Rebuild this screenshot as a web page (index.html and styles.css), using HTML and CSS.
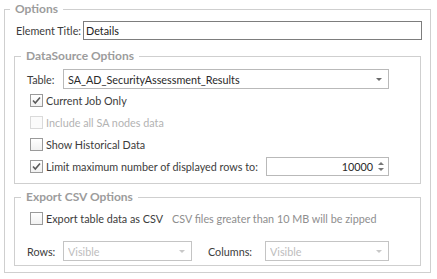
FILE: index.html
```html
<!DOCTYPE html>
<html>
<head>
<meta charset="utf-8">
<link rel="stylesheet" href="styles.css">
</head>
<body>
<fieldset class="group outer">
  <legend class="legend">Options</legend>
  <div class="title-row">
    <span class="label">Element Title:</span>
    <div class="textbox">Details</div>
  </div>

  <fieldset class="group inner ds">
    <legend class="legend">DataSource Options</legend>
    <div class="table-row">
      <span class="label field-label">Table:</span>
      <div class="combo">
        <span class="combo-text">SA_AD_SecurityAssessment_Results</span>
        <span class="arrow"></span>
      </div>
    </div>
    <div class="check-row">
      <span class="cb checked"><svg viewBox="0 0 13 13" width="13" height="13"><path d="M3 6.5 L5.3 9 L10 3.5" fill="none" stroke="#5a5a5a" stroke-width="1.6"/></svg></span>
      <span class="label">Current Job Only</span>
    </div>
    <div class="check-row disabled">
      <span class="cb"></span>
      <span class="label">Include all SA nodes data</span>
    </div>
    <div class="check-row">
      <span class="cb"></span>
      <span class="label">Show Historical Data</span>
    </div>
    <div class="check-row limit-row">
      <span class="cb checked"><svg viewBox="0 0 13 13" width="13" height="13"><path d="M3 6.5 L5.3 9 L10 3.5" fill="none" stroke="#5a5a5a" stroke-width="1.6"/></svg></span>
      <span class="label">Limit maximum number of displayed rows to:</span>
      <div class="spin">
        <span class="spin-value">10000</span>
        <span class="spin-btns"><span class="up"></span><span class="down"></span></span>
      </div>
    </div>
  </fieldset>

  <fieldset class="group inner csv">
    <legend class="legend">Export CSV Options</legend>
    <div class="check-row">
      <span class="cb"></span>
      <span class="label">Export table data as CSV</span>
      <span class="note">CSV files greater than 10 MB will be zipped</span>
    </div>
    <div class="rc-row">
      <span class="label field-label">Rows:</span>
      <div class="combo disabled-combo rows-combo">
        <span class="combo-text">Visible</span>
        <span class="arrow"></span>
      </div>
      <span class="label cols-label">Columns:</span>
      <div class="combo disabled-combo cols-combo">
        <span class="combo-text">Visible</span>
        <span class="arrow"></span>
      </div>
    </div>
  </fieldset>
</fieldset>
</body>
</html>
```

FILE: styles.css
```css
html, body {
  margin: 0;
  padding: 0;
  background: #ffffff;
}
body {
  font-family: Lato, "Open Sans", sans-serif;
  font-size: 10.8px;
  color: #3c3c3c;
  width: 437px;
  height: 279px;
  overflow: hidden;
}
.group {
  border: 1px solid #cfcfcf;
  margin: 0;
  min-width: 0;
}
.legend {
  font-weight: bold;
  font-size: 12px;
  line-height: 16px;
  color: #9c9c9c;
  padding: 0 5px;
}
.outer {
  margin: 1px 6px 0 4px;
  padding: 0 8px 6px 9px;
}
.outer > .legend {
  margin-left: -4px;
}
.title-row {
  display: flex;
  align-items: center;
  height: 19px;
  margin: 4px 0 0 2px;
}
.title-row .label {
  width: 67px;
  flex: none;
  white-space: nowrap;
}
.textbox {
  flex: 1;
  height: 17px;
  border: 1px solid #7d7d7d;
  line-height: 17px;
  padding-left: 2px;
  color: #222;
}
.inner {
  margin: 0 1px 0 0;
  padding: 0 31px 0 12px;
}
.inner > .legend {
  margin-left: -6px;
}
.ds {
  margin-top: 8px;
  padding-bottom: 6px;
}
.table-row {
  display: flex;
  align-items: center;
  height: 20px;
  margin-top: 5px;
}
.field-label {
  width: 36px;
  flex: none;
}
.combo {
  flex: 1;
  height: 18px;
  border: 1px solid #b9b9b9;
  display: flex;
  align-items: center;
  padding-left: 4px;
  padding-right: 6px;
  color: #2a2a2a;
}
.combo-text {
  flex: 1;
  white-space: nowrap;
  overflow: hidden;
}
.arrow {
  width: 0;
  height: 0;
  border-left: 3px solid transparent;
  border-right: 3px solid transparent;
  border-top: 3px solid #6a6a6a;
  flex: none;
}
.check-row {
  display: flex;
  align-items: center;
  height: 22px;
  padding-left: 3px;
  white-space: nowrap;
}
.cb {
  width: 11px;
  height: 11px;
  border: 1px solid #9a9a9a;
  background: linear-gradient(#ffffff, #f1f1f1);
  flex: none;
  margin-right: 3px;
  position: relative;
}
.cb svg {
  position: absolute;
  left: -1px;
  top: -1px;
}
.disabled .cb {
  border-color: #dadada;
  background: #fbfbfb;
}
.disabled .label {
  color: #b3b3b3;
}
.limit-row .label {
  width: 220px;
  flex: none;
}
.spin {
  flex: 1;
  height: 17px;
  border: 1px solid #b9b9b9;
  display: flex;
  align-items: center;
  justify-content: flex-end;
  padding-right: 4px;
  color: #2a2a2a;
}
.spin-value {
  margin-right: 5px;
}
.spin-btns {
  display: flex;
  flex-direction: column;
  gap: 3px;
}
.spin-btns .up {
  width: 0;
  height: 0;
  border-left: 3px solid transparent;
  border-right: 3px solid transparent;
  border-bottom: 3px solid #777;
}
.spin-btns .down {
  width: 0;
  height: 0;
  border-left: 3px solid transparent;
  border-right: 3px solid transparent;
  border-top: 3px solid #777;
}
.csv {
  margin-top: 5px;
  padding-bottom: 4px;
}
.csv .check-row {
  margin-top: 2px;
}
.note {
  color: #8e8e8e;
  margin-left: 9px;
}
.rc-row {
  display: flex;
  align-items: center;
  height: 20px;
  margin-top: 12px;
}
.disabled-combo {
  color: #bdbdbd;
  border-color: #c4c4c4;
}
.disabled-combo .arrow {
  border-top-color: #c8c8c8;
}
.rows-combo {
  flex: none;
  width: 117px;
}
.cols-label {
  margin-left: 16px;
  width: 57px;
  flex: none;
}
.cols-combo {
  flex: 1;
}
```
